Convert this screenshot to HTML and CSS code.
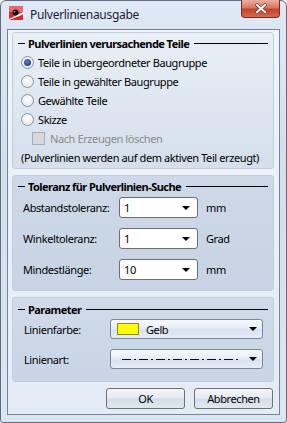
FILE: index.html
```html
<!DOCTYPE html>
<html>
<head>
	<title>Pulverlinienausgabe</title>
	<link rel="stylesheet" href="styles.css">
</head>
<body>
	<div class="window">
		<div class="titlebar">
			<svg class="app-icon" width="14" height="14" viewBox="0 0 14 14">
				<rect x="0" y="0" width="14" height="14" fill="#d42a2f"/>
				<rect x="0" y="0" width="14" height="6" fill="#e86a6c"/>
				<polygon points="0,13 14,6 14,8.5 0,14" fill="#ffffff"/>
				<circle cx="6.5" cy="6.5" r="3" fill="#111111"/>
				<circle cx="5.6" cy="5.6" r="0.9" fill="#9a9a9a"/>
			</svg>
			<span class="title">Pulverlinienausgabe</span>
			<div class="close">
				<svg width="14" height="11" viewBox="0 0 14 11">
					<path d="M3 2 L11 9 M11 2 L3 9" stroke="#6b3a34" stroke-width="3.4" stroke-linecap="square"/>
					<path d="M3 2 L11 9 M11 2 L3 9" stroke="#ffffff" stroke-width="2" stroke-linecap="square"/>
				</svg>
			</div>
		</div>

		<div class="client">
			<div class="group group-parts">
				<div class="legend"><span class="dash"></span><span class="legend-text">Pulverlinien verursachende Teile</span><span class="rule"></span></div>
				<div class="row"><span class="radio checked"></span>Teile in übergeordneter Baugruppe</div>
				<div class="row"><span class="radio"></span>Teile in gewählter Baugruppe</div>
				<div class="row"><span class="radio"></span>Gewählte Teile</div>
				<div class="row"><span class="radio"></span>Skizze</div>
				<div class="row sub disabled"><span class="check"></span>Nach Erzeugen löschen</div>
				<div class="row note">(Pulverlinien werden auf dem aktiven Teil erzeugt)</div>
			</div>

			<div class="group group-tol">
				<div class="legend"><span class="dash"></span><span class="legend-text">Toleranz für Pulverlinien-Suche</span><span class="rule"></span></div>
				<div class="field">
					<span class="label">Abstandstoleranz:</span>
					<div class="combo"><span>1</span><span class="arrow"></span></div>
					<span class="unit">mm</span>
				</div>
				<div class="field">
					<span class="label">Winkeltoleranz:</span>
					<div class="combo"><span>1</span><span class="arrow"></span></div>
					<span class="unit">Grad</span>
				</div>
				<div class="field">
					<span class="label">Mindestlänge:</span>
					<div class="combo"><span>10</span><span class="arrow"></span></div>
					<span class="unit">mm</span>
				</div>
			</div>

			<div class="group group-param">
				<div class="legend"><span class="dash"></span><span class="legend-text">Parameter</span><span class="rule"></span></div>
				<div class="field">
					<span class="label">Linienfarbe:</span>
					<div class="picker">
						<span class="swatch"></span>
						<span class="picker-text">Gelb</span>
						<span class="arrow"></span>
					</div>
				</div>
				<div class="field">
					<span class="label">Linienart:</span>
					<div class="picker">
						<svg class="linetype" width="118" height="3" viewBox="0 0 118 3">
							<line x1="0" y1="1.5" x2="118" y2="1.5" stroke="#111111" stroke-width="1" stroke-dasharray="9 3 2 3"/>
						</svg>
						<span class="arrow"></span>
					</div>
				</div>
			</div>

			<div class="buttons">
				<button class="btn">OK</button>
				<button class="btn">Abbrechen</button>
			</div>
		</div>
	</div>
</body>
</html>
```

FILE: styles.css
```css
html, body {
	margin: 0;
	padding: 0;
}
body {
	font-family: "Noto Sans", "Open Sans", sans-serif;
	font-size: 11px;
	letter-spacing: -0.4px;
	color: #000000;
	background-color: #ffffff;
}
.window {
	width: 287px;
	height: 423px;
	box-sizing: border-box;
	border: 1px solid #5f6d7d;
	border-radius: 6px 6px 3px 3px;
	background: linear-gradient(to bottom, #dfe9f5, #d3dfee 40%, #dce6f2);
	display: flex;
	flex-direction: column;
}
.titlebar {
	height: 28px;
	display: flex;
	align-items: flex-start;
	position: relative;
}
.app-icon {
	margin: 5px 0 0 8px;
}
.title {
	margin: 5px 0 0 7px;
	font-size: 12px;
	letter-spacing: -0.3px;
	color: #1c1b3d;
}
.close {
	position: absolute;
	top: -1px;
	right: 6px;
	width: 39px;
	height: 18px;
	box-sizing: border-box;
	border: 1px solid #7e2d22;
	border-top: none;
	border-radius: 0 0 4px 4px;
	background: linear-gradient(to bottom, #eab0a4, #d9785f 45%, #c4432a 55%, #d3694c);
	display: flex;
	align-items: center;
	justify-content: center;
}
.client {
	margin: 0 6px;
	height: 386px;
	box-sizing: border-box;
	border: 1px solid #75849a;
	background: linear-gradient(to bottom, #f1f5fa, #e4ebf5);
	padding: 2px 5px 0 4px;
	display: flex;
	flex-direction: column;
	gap: 6px;
}
.group {
	border: 1px solid #c2cedc;
	border-radius: 3px;
	padding: 0 5px 0 5px;
	background: linear-gradient(to bottom, #e4ebf3, #ccd8e7);
}
.group-parts {
	height: 137px;
	box-sizing: border-box;
	background: linear-gradient(to bottom, #e9eff6, #d4dfeb);
}
.group-tol {
	height: 116px;
	box-sizing: border-box;
	background: linear-gradient(to bottom, #cdd9e8, #c7d4e5);
}
.group-param {
	height: 85px;
	box-sizing: border-box;
	padding-top: 1px;
	background: linear-gradient(to bottom, #cfdbea, #c8d5e6);
}
.legend {
	height: 20px;
	display: flex;
	align-items: center;
	font-weight: bold;
	letter-spacing: -0.55px;
}
.dash {
	width: 7px;
	height: 1px;
	background-color: #000000;
}
.legend-text {
	margin: 0 5px 0 3px;
	white-space: nowrap;
}
.rule {
	flex: 1;
	height: 1px;
	background-color: #000000;
}
.row {
	height: 19px;
	display: flex;
	align-items: center;
	padding-left: 3px;
	white-space: nowrap;
}
.radio {
	width: 11px;
	height: 11px;
	border: 1px solid #8a939e;
	border-radius: 50%;
	background: radial-gradient(circle at 50% 40%, #ffffff, #dde2e8);
	margin-right: 4px;
	display: flex;
	align-items: center;
	justify-content: center;
}
.radio.checked::after {
	content: "";
	width: 7px;
	height: 7px;
	border-radius: 50%;
	background: radial-gradient(circle at 40% 35%, #5f7fc8, #0e2a7a);
}
.sub {
	padding-left: 14px;
}
.check {
	width: 11px;
	height: 11px;
	border: 1px solid #a9adb3;
	background-color: #d6d8db;
	margin-right: 5px;
}
.disabled {
	color: #8a8a8a;
}
.note {
	padding-left: 3px;
}
.group-tol .legend {
	margin-bottom: 1px;
}
.field {
	display: flex;
	align-items: center;
	padding-left: 5px;
	margin-bottom: 10px;
}
.label {
	width: 96px;
	white-space: nowrap;
}
.group-param .field {
	margin-bottom: 10px;
	padding-left: 6px;
}
.group-param .field:first-of-type {
	margin-top: 2px;
}
.group-param .label {
	width: 86px;
}
.combo {
	width: 79px;
	height: 21px;
	box-sizing: border-box;
	border: 1px solid #6f6f6f;
	border-radius: 3px;
	background-color: #ffffff;
	display: flex;
	align-items: center;
	justify-content: space-between;
	padding: 0 7px 0 4px;
}
.unit {
	margin-left: 8px;
}
.arrow {
	width: 0;
	height: 0;
	border-left: 4px solid transparent;
	border-right: 4px solid transparent;
	border-top: 4px solid #000000;
}
.picker {
	width: 153px;
	height: 20px;
	box-sizing: border-box;
	border: 1px solid #7c8795;
	border-radius: 3px;
	background: linear-gradient(to bottom, #f7f9fc, #e8eef6 45%, #d8e2ef 55%, #e6edf6);
	display: flex;
	align-items: center;
	padding: 0 5px 0 6px;
}
.swatch {
	width: 20px;
	height: 10px;
	border: 1px solid #8c8c2a;
	background-color: #ffff00;
}
.picker-text {
	flex: 1;
	margin-left: 7px;
}
.linetype {
	margin-left: 5px;
	flex: none;
}
.picker .linetype + .arrow {
	margin-left: auto;
}
.buttons {
	display: flex;
	justify-content: flex-end;
	gap: 9px;
	padding-right: 1px;
}
.btn {
	width: 79px;
	height: 21px;
	font-family: inherit;
	font-size: 11px;
	letter-spacing: -0.4px;
	color: #000000;
	border: 1px solid #707070;
	border-radius: 3px;
	background: linear-gradient(to bottom, #f4f6f9, #e6ebf2 45%, #d6dde7 55%, #e2e7ee);
	padding: 0;
}
```
